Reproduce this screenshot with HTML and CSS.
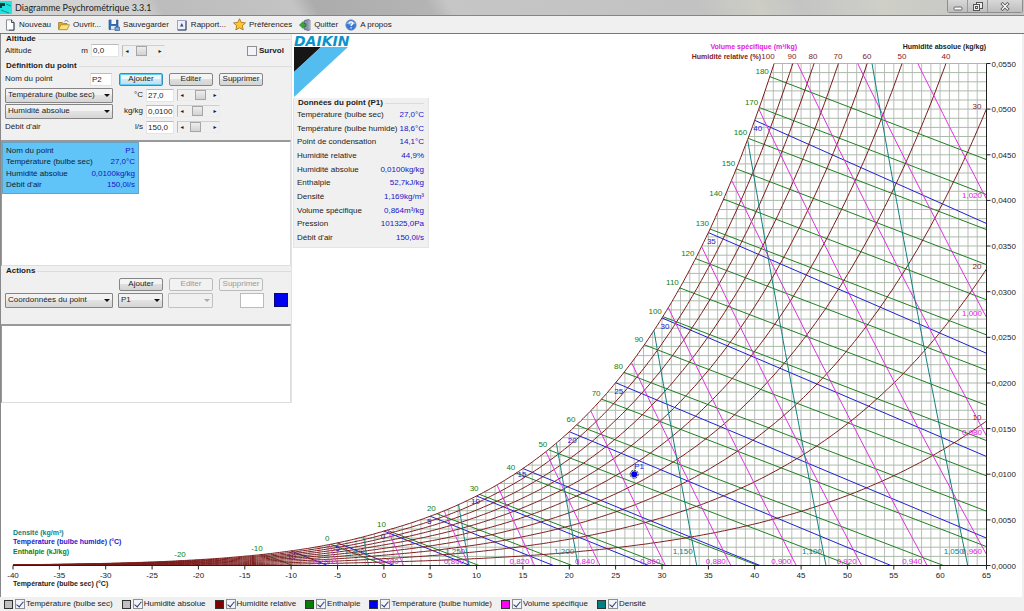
FILE: index.html
```html
<!DOCTYPE html>
<html lang="fr">
<head>
<meta charset="utf-8">
<title>Diagramme Psychrométrique 3.3.1</title>
<link rel="stylesheet" href="styles.css">
</head>
<body>
<div class="app">
  <header class="titlebar">
    <svg class="app-icon" width="12" height="14" viewBox="0 0 12 14" aria-hidden="true"><rect width="12" height="13" fill="#1fe3e0"/><path d="M0 2h5v3H2v2H0z" fill="#103b3c"/><path d="M6 3l5 2M1 9l8 3" stroke="#12908f"/></svg>
    <h1 class="title">Diagramme Psychrométrique 3.3.1</h1>
    <div class="window-buttons">
      <button class="win" type="button" aria-label="Réduire"><svg width="10" height="9" viewBox="0 0 10 9"><rect x="1" y="5" width="8" height="3" rx="1" fill="#fff" stroke="#666"/></svg></button>
      <button class="win" type="button" aria-label="Restaurer"><svg width="10" height="9" viewBox="0 0 10 9" fill="#eee" stroke="#555"><rect x="3.5" y=".5" width="6" height="6"/><rect x=".5" y="2.5" width="6" height="6"/><rect x="2.5" y="4.5" width="2" height="2"/></svg></button>
      <button class="win win-close" type="button" aria-label="Fermer"><svg width="10" height="9" viewBox="0 0 10 9"><path d="M1.5 1l7 7M8.500 1l-7 7" stroke="#555" stroke-width="3"/><path d="M2 1.500l6 6M8 1.500l-6 6" stroke="#fff" stroke-width="1.300"/></svg></button>
    </div>
  </header>

  <nav class="toolbar">
    <button class="tool" type="button"><svg width="12" height="12" viewBox="0 0 12 12"><path d="M2.500.8h5l2.500 2.700v7.700h-7.500z" fill="#fff" stroke="#8a8f9c"/><path d="M7.500.8v2.700H10v7.700H5" fill="none" stroke="#444a5c"/></svg>Nouveau</button>
    <button class="tool" type="button"><svg width="12" height="12" viewBox="0 0 12 12"><path d="M.6 10.500V3.500h3.800l1 1h3.600v6z" fill="#e5a92e" stroke="#9a762a" stroke-width=".8"/><path d="M.6 10.700l2.300-5h8.600l-2.400 5z" fill="#ffe07a" stroke="#b08a2c" stroke-width=".8"/><path d="M6.500 2.400c1.500-1.500 3-1 3.700.4" fill="none" stroke="#5c7da8"/></svg>Ouvrir...</button>
    <button class="tool" type="button"><svg width="12" height="12" viewBox="0 0 12 12"><path d="M1 1h2.500v4h5V1H10v9.500H1z" fill="#3574bd" stroke="#1c4780" stroke-width=".6"/><rect x="3.500" y="1" width="4.500" height="4" fill="#f4f8fd"/><rect x="3" y="7" width="5" height="3.500" fill="#dce8f5"/><path d="M7 8h4.500v3.500H7z" fill="#7ea8da" stroke="#234c80" stroke-width=".6"/></svg>Sauvegarder</button>
    <button class="tool" type="button"><svg width="12" height="12" viewBox="0 0 12 12"><rect x="1.500" y="1.500" width="8.500" height="9.500" fill="#eef1fa" stroke="#9aa4c4"/><path d="M10 2v9H2" fill="none" stroke="#2f3c66"/><path d="M4 7.500l1.800-3.500L7.500 7.500z" fill="#3a4678"/></svg>Rapport...</button>
    <button class="tool" type="button"><svg width="13" height="13" viewBox="0 0 12 12"><path d="M6 .6l1.600 3.500 3.900.4-2.900 2.600.8 3.900L6 9.100 2.600 11l.8-3.900L.5 4.500l3.900-.4z" fill="#ffc634" stroke="#a8731c" stroke-width=".8"/></svg>Préférences</button>
    <button class="tool" type="button"><svg width="12" height="12" viewBox="0 0 12 12"><path d="M5.500 1.500l4-1v11l-4-1z" fill="#8c94b4" stroke="#4a5070" stroke-width=".7"/><path d="M9.500 1h1.500v10H9.500" fill="#c9cde0" stroke="#565c7a" stroke-width=".6"/><path d="M7 4.700H4.300V2.500L.5 6l3.800 3.500V7.300H7z" fill="#34b233" stroke="#14701a" stroke-width=".7"/></svg>Quitter</button>
    <button class="tool" type="button"><svg width="12" height="12" viewBox="0 0 12 12"><circle cx="6" cy="6" r="5.200" fill="#3c78cf" stroke="#6f8fc4" stroke-width=".8"/><path d="M1.500 4.500a5 4 0 0 1 9 0c-2 1.500-7 1.500-9 0z" fill="#8fb8ee"/><path d="M4.300 4.400c.2-2 3.500-1.900 3.400 0 0 1.200-1.600 1.100-1.600 2.600M6.100 8.200v1.300" fill="none" stroke="#fff" stroke-width="1.300"/></svg>A propos</button>
  </nav>

  <main class="workspace">
    <svg class="chart" id="chart" viewBox="0 34 1024 563" preserveAspectRatio="xMinYMin meet" role="img" aria-label="Diagramme psychrométrique"></svg>

    <aside class="side">
      <section class="group">
        <h2 class="group-title">Altitude</h2>
        <div class="row">
          <label class="wide" for="alt">Altitude</label><span class="unit unit-alt">m</span>
          <input class="field field-alt" id="alt" value="0,0">
          <span class="slider"><button class="step" type="button" aria-label="Moins">◂</button><input class="range" type="range" aria-label="Altitude" value="35"><button class="step" type="button" aria-label="Plus">▸</button></span>
          <label class="check"><input class="box" type="checkbox">Survol</label>
        </div>
      </section>

      <section class="group group-def">
        <h2 class="group-title">Définition du point</h2>
        <div class="row">
          <label class="name" for="name">Nom du point</label>
          <input class="field field-name" id="name" value="P2">
          <div class="buttons"><button class="btn btn-default" type="button">Ajouter</button><button class="btn" type="button">Editer</button><button class="btn" type="button">Supprimer</button></div>
        </div>
        <div class="row">
          <span class="select"><select aria-label="Premier paramètre"><option>Température (bulbe sec)</option></select></span><label class="unit" for="t">°C</label>
          <input class="field" id="t" value="27,0">
          <span class="slider"><button class="step" type="button" aria-label="Moins">◂</button><input class="range" type="range" aria-label="Température" value="66"><button class="step" type="button" aria-label="Plus">▸</button></span>
        </div>
        <div class="row">
          <span class="select"><select aria-label="Second paramètre"><option>Humidité absolue</option></select></span><label class="unit" for="w">kg/kg</label>
          <input class="field" id="w" value="0,0100">
          <span class="slider"><button class="step" type="button" aria-label="Moins">◂</button><input class="range" type="range" aria-label="Humidité" value="40"><button class="step" type="button" aria-label="Plus">▸</button></span>
        </div>
        <div class="row">
          <label class="select-label" for="q">Débit d'air</label><span class="unit">l/s</span>
          <input class="field" id="q" value="150,0">
          <span class="slider"><button class="step" type="button" aria-label="Moins">◂</button><input class="range" type="range" aria-label="Débit" value="25"><button class="step" type="button" aria-label="Plus">▸</button></span>
        </div>
      </section>

      <div class="list list-points">
        <table class="point rows">
          <tbody>
          <tr><th>Nom du point</th><td>P1</td></tr>
          <tr><th>Température (bulbe sec)</th><td>27,0°C</td></tr>
          <tr><th>Humidité absolue</th><td>0,0100kg/kg</td></tr>
          <tr><th>Débit d'air</th><td>150,0l/s</td></tr>
          </tbody>
        </table>
      </div>

      <section class="group group-actions">
        <h2 class="group-title">Actions</h2>
        <div class="row row-end">
          <div class="buttons"><button class="btn" type="button">Ajouter</button><button class="btn" type="button" disabled>Editer</button><button class="btn" type="button" disabled>Supprimer</button></div>
        </div>
        <div class="row">
          <span class="select"><select aria-label="Action"><option>Coordonnées du point</option></select></span>
          <span class="select select-small"><select aria-label="Point"><option>P1</option></select></span>
          <span class="select select-small select-off"><select aria-label="Second point" disabled><option></option></select></span>
          <input class="field field-value" aria-label="Valeur">
          <button class="swatch-btn" type="button" aria-label="Couleur"></button>
        </div>
      </section>

      <div class="list list-actions"></div>
    </aside>

    <div class="info">
      <div class="logo">
        <span class="logo-name">DAIKIN</span>
        <svg width="55" height="50" viewBox="0 0 55 50" aria-hidden="true"><path d="M0 0h27L0 25z" fill="#161616"/><path d="M27 0h27L0 50V25z" fill="#53bdf0"/></svg>
      </div>
      <section class="data">
        <h2 class="group-title">Données du point (P1)</h2>
        <table class="data-table rows">
          <tbody>
          <tr><th>Température (bulbe sec)</th><td>27,0°C</td></tr>
          <tr><th>Température (bulbe humide)</th><td>18,6°C</td></tr>
          <tr><th>Point de condensation</th><td>14,1°C</td></tr>
          <tr><th>Humidité relative</th><td>44,9%</td></tr>
          <tr><th>Humidité absolue</th><td>0,0100kg/kg</td></tr>
          <tr><th>Enthalpie</th><td>52,7kJ/kg</td></tr>
          <tr><th>Densité</th><td>1,169kg/m³</td></tr>
          <tr><th>Volume spécifique</th><td>0,864m³/kg</td></tr>
          <tr><th>Pression</th><td>101325,0Pa</td></tr>
          <tr><th>Débit d'air</th><td>150,0l/s</td></tr>
          </tbody>
        </table>
      </section>
    </div>
  </main>

  <footer class="legend">
    <label class="key"><span class="swatch c-grey"></span><input class="box" type="checkbox" checked>Température (bulbe sec)</label>
    <label class="key"><span class="swatch c-grey"></span><input class="box" type="checkbox" checked>Humidité absolue</label>
    <label class="key"><span class="swatch c-red"></span><input class="box" type="checkbox" checked>Humidité relative</label>
    <label class="key"><span class="swatch c-green"></span><input class="box" type="checkbox" checked>Enthalpie</label>
    <label class="key"><span class="swatch c-blue"></span><input class="box" type="checkbox" checked>Température (bulbe humide)</label>
    <label class="key"><span class="swatch c-pink"></span><input class="box" type="checkbox" checked>Volume spécifique</label>
    <label class="key"><span class="swatch c-teal"></span><input class="box" type="checkbox" checked>Densité</label>
  </footer>
</div>
<script src="chart.js"></script>
</body>
</html>
```

FILE: styles.css
```css
* { box-sizing: border-box; }
body { margin: 0; background: #f0f0f0; color: #1c1c1c; font: 8px/10px "Liberation Sans", Arial, sans-serif; }
button, input, select { font: inherit; color: inherit; margin: 0; padding: 0; }
h1, h2 { margin: 0; font-size: inherit; }

.app { display: flex; flex-direction: column; min-height: 100vh; }

.titlebar {
  display: flex; align-items: center; height: 16px; flex: none;
  border-bottom: 1px solid #858585;
  background: linear-gradient(60deg, #d6d6d6 0, #cfcfcf 14%, #bcbcbc 16%, #c4c4c4 29%, #acacac 31%, #b4b4b4 42%, #c6c6c6 44%, #c2c2c2 68%, #cdcdc6 74%, #c4c4c4 78%, #cfcfc8 86%, #c2c2c2 100%);
}
.app-icon { flex: none; }
.title { margin-left: 3px; font: 9px/14px Lato, sans-serif; color: #222; }
.window-buttons { display: flex; align-self: flex-start; margin: 0 1px 0 auto; border: 1px solid #8d8d8d; border-top: 0; border-radius: 0 0 3px 3px; }
.win { display: grid; place-items: center; width: 20px; height: 12px; border: 0; border-right: 1px solid #999; background: linear-gradient(#d8d8d8, #bdbdbd); }
.win-close { width: 34px; border-right: 0; }

.toolbar { display: flex; align-items: center; gap: 7px; height: 18px; flex: none; padding-left: 4px; border-bottom: 1px solid #777; }
.tool { display: flex; align-items: center; gap: 3px; border: 0; background: none; }

.workspace { display: grid; grid-template-columns: 292px 137px 1fr; flex: 1; align-items: start; background: #fff; box-shadow: inset 1px 0 #888, inset -2px 0 #f0f0f0; }
.chart { grid-area: 1 / 1 / 2 / -1; display: block; width: 100%; height: auto; }
.side { grid-area: 1 / 1; background: #f0f0f0; border-left: 1px solid #888; border-right: 1px solid #e2e2e2; }
.info { grid-area: 1 / 2; padding: 2px 0 0 1px; }

.group { padding: 0 0 1px 4px; }
.group-title { display: flex; align-items: center; gap: 2px; height: 10px; padding-left: 1px; font-weight: bold; }
.group-title::after { content: ""; flex: 1; height: 1px; background: #dcdcdc; }
.group-def { padding: 3px 0 5px 4px; }
.group-def .row { height: 16px; }
.group-actions { padding-bottom: 16px; }
.row { display: flex; align-items: center; height: 13px; }
.group-actions .row { height: 16px; }
.row-end { padding-left: 114px; }

.wide { width: 68px; }
.unit { width: 30px; text-align: right; }
.unit-alt { width: 15px; }
.name { width: 85px; }
.select-label { width: 108px; }
.field { width: 28px; height: 13px; margin: 0 2px 0 3px; padding-left: 1px; border: 1px solid #e4e4e4; border-top-color: #bbb; background: #fff; }
.field-name { width: 22px; margin: 0 7px 0 0; }
.field-value { width: 24px; margin: 0 10px 0 27px; height: 15px; border-color: #bbb; }
.swatch-btn { width: 14px; height: 14px; border: 1px solid #0a0a70; background: #0000f0; }

.buttons { display: flex; gap: 6px; }
.btn { width: 44px; height: 13px; border: 1px solid #858585; border-radius: 2px; background: linear-gradient(#f4f4f4 45%, #dedede 50%, #d4d4d4); line-height: 10px; }
.btn-default { border-color: #2f8fc0; box-shadow: inset 0 0 0 1px #5fd0f5; background: linear-gradient(#eef7fb 45%, #d3e7f1 50%, #c4dde9); }
.btn:disabled { color: #999; border-color: #bbb; background: #f2f2f2; }

.select { display: grid; align-items: center; width: 108px; }
.select select { grid-area: 1 / 1; width: 100%; height: 15px; appearance: none; padding-left: 2px; border: 1px solid #858585; border-radius: 1px; background: linear-gradient(#f2f2f2 45%, #e2e2e2 50%, #d6d6d6); }
.select::after { content: ""; grid-area: 1 / 1; z-index: 1; justify-self: end; margin-right: 3px; border: 3px solid transparent; border-top-color: #111; border-bottom: 0; pointer-events: none; }
.select-small { width: 45px; margin-left: 5px; }
.select-off select { border-color: #c2c2c2; background: #f0f0f0; opacity: 1; }
.select-off::after { border-top-color: #aaa; }

.slider { display: flex; align-items: center; width: 43px; height: 12px; margin-left: 1px; border: 1px solid #dadada; border-color: #cfcfcf #ececec #ececec #bbb; }
.step { width: 8px; border: 0; background: none; font: 6px/10px "DejaVu Sans", sans-serif; }
.range { flex: 1; min-width: 0; height: 10px; appearance: none; background: none; }
.range::-webkit-slider-thumb { appearance: none; width: 11px; height: 10px; border: 1px solid #a6a6a6; background: linear-gradient(#eee, #d2d2d2); }

.check { display: flex; align-items: center; gap: 2px; margin-left: 82px; font-weight: bold; }
.box { display: grid; place-items: center; width: 10px; height: 10px; flex: none; appearance: none; border: 1px solid #8e8f8f; background: #f2f4f8; }
.box:checked::after { content: ""; width: 3px; height: 6px; margin-top: -1px; border: solid #2b3a78; border-width: 0 1px 1px 0; transform: rotate(40deg); }

.list { border: 1px solid #ddd; border-top: 2px solid #999; border-left-color: #999; background: #fff; }
.list-points { height: 126px; }
.list-actions { height: 79px; }
.rows { display: block; white-space: nowrap; }
.rows tbody { display: flex; flex-direction: column; justify-content: space-between; height: 100%; }
.rows tr { display: flex; justify-content: space-between; }
th, td { padding: 0; font-weight: normal; text-align: left; }
td { text-align: right; color: #1414c8; }
.point { width: 137px; height: 52px; border: 1px solid #6aa0c0; padding: 3px; background: #60c4f8; }
.point th { color: #123; }

.logo { display: flex; flex-direction: column; gap: 1px; height: 62px; padding-left: 1px; }
.logo-name { font: italic bold 14px/10px "DejaVu Sans", sans-serif; color: #0b93c8; }
.data { border: 1px solid #e4e4e4; border-top: 0; background: #f0f0f0; padding: 0 4px 4px 3px; }
.data-table { height: 135px; padding-top: 2px; }

.legend { display: flex; align-items: center; gap: 9px; height: 14px; flex: none; padding-left: 4px; }
.key { display: flex; align-items: center; gap: 1px; white-space: nowrap; }
.swatch { width: 9px; height: 9px; margin-right: 1px; border: 1px solid #333; }
.c-grey { background: #c0c0c0; }
.c-red { background: #800000; }
.c-green { background: #008000; }
.c-blue { background: #0000f0; }
.c-pink { background: #ff00ff; }
.c-teal { background: #008080; }

.grid-v { stroke: #bcbcbc; }
.grid-h { stroke: #a9bca9; }
.rh { stroke: #7c1c1c; }
.enthalpy { stroke: #208020; }
.wet { stroke: #2020d0; }
.volume { stroke: #e030e0; }
.density { stroke: #108080; }
.axis { stroke: #222; }
.chart path { fill: none; stroke-width: 1; }
.t-black { fill: #222; }
.t-rh { fill: #801c1c; }
.t-enthalpy { fill: #108010; }
.t-wet { fill: #1818d0; }
.t-volume { fill: #e020e0; }
.t-density { fill: #108080; }
.bold { font-size: 7px; font-weight: bold; }
.dot { fill: #0000e8; }
.dot-ring { fill: none; stroke: #222; stroke-dasharray: 2 1; }
```

FILE: chart.js
```js
const svg = document.getElementById('chart');
const NS = 'http://www.w3.org/2000/svg';
const T_MIN = -40, T_MAX = 65, W_MAX = 0.055, P = 101325;
const LEFT = 13, RIGHT = 986.5, TOP = 63.5, BOTTOM = 565.5;

const px = t => LEFT + (t - T_MIN) * (RIGHT - LEFT) / (T_MAX - T_MIN);
const py = w => BOTTOM - w * (BOTTOM - TOP) / W_MAX;

// Saturation vapour pressure (Pa), over ice below 0 °C.
const psat = t => t < 0
  ? 611.15 * Math.exp(22.452 * t / (272.55 + t))
  : 611.2 * Math.exp(17.62 * t / (243.12 + t));
const humidity = (t, rh) => 0.622 * rh * psat(t) / (P - rh * psat(t));

function el(name, attrs, text) {
  const node = document.createElementNS(NS, name);
  for (const key in attrs) node.setAttribute(key, attrs[key]);
  if (text !== undefined) node.textContent = text;
  svg.appendChild(node);
}
const path = (cls, pts) => el('path', { class: cls, d: 'M' + pts.map(p => p[0].toFixed(1) + ' ' + p[1].toFixed(1)).join('L') });
const label = (cls, x, y, text, anchor = 'middle') => el('text', { class: cls, x, y, 'text-anchor': anchor }, text);

function solve(f, lo, hi) {
  const sign = f(lo) < 0;
  for (let i = 0; i < 50; i++) {
    const mid = (lo + hi) / 2;
    if ((f(mid) < 0) === sign) lo = mid; else hi = mid;
  }
  return (lo + hi) / 2;
}

for (let t = T_MIN + 1; t <= T_MAX; t++) {
  path('grid-v', [[px(t), BOTTOM], [px(t), py(Math.min(W_MAX, humidity(t, 1)))]]);
}
for (let i = 1; i <= 55; i++) {
  const t = solve(v => humidity(v, 1) - i / 1000, -40, 65);
  path('grid-h', [[px(t), py(i / 1000)], [RIGHT, py(i / 1000)]]);
}

// Straight line falling from the saturation curve at temperature t.
function falling(cls, t, slope) {
  const x = px(t), y = py(humidity(t, 1));
  let x2 = RIGHT, y2 = y + (RIGHT - x) * slope;
  if (y2 > BOTTOM) { x2 = x + (BOTTOM - y) / slope; y2 = BOTTOM; }
  path(cls, [[x, y], [x2, y2]]);
  return [x, y];
}

for (let h = -20; h <= 180; h += 10) {
  const t = solve(v => 1.006 * v + humidity(v, 1) * (2501 + 1.86 * v) - h, -40, 60);
  const [x, y] = falling('enthalpy', t, 0.383);
  label('t-enthalpy', x - 1, y - 3, h, 'end');
}

const wetSlopes = { '-10': 0.4, '-5': 0.4, 0: 0.4, 5: 0.4, 10: 0.404, 15: 0.409, 20: 0.416, 25: 0.419, 30: 0.427, 35: 0.434, 40: 0.445 };
for (let t = -10; t <= 40; t += 5) {
  const [x, y] = falling('wet', t, wetSlopes[t]);
  label('t-wet', x + (t >= 20 ? 3 : -1), y + 11 - (t < 20 ? 3 : 0), t);
}

for (let i = 1; i <= 10; i++) {
  const pts = [];
  for (let t = T_MIN; t <= T_MAX; t += 0.25) {
    if (humidity(t, i / 10) > W_MAX) {
      pts.push([px(solve(v => humidity(v, i / 10) - W_MAX, 0, 80)), TOP]);
      break;
    }
    pts.push([px(t), py(humidity(t, i / 10))]);
  }
  path('rh', pts);
}

// Line t(w) running from w = 0 up to saturation, the top or the right edge.
function rising(cls, tAt) {
  const full = solve(w => tAt(w) - solve(t => humidity(t, 1) - w, -45, 70), 0.0003, 0.1);
  const wEnd = Math.min(full, W_MAX);
  const pts = [];
  for (let i = 0; i <= 40; i++) {
    const w = wEnd * i / 40;
    if (tAt(w) <= T_MAX) pts.push([px(tAt(w)), py(w)]);
  }
  if (tAt(0) > T_MAX) pts.unshift([RIGHT, py(solve(w => tAt(w) - T_MAX, 0, W_MAX))]);
  path(cls, pts);
  return pts[0];
}
const comma = v => v.toFixed(3).replace('.', ',');

for (let v = 0.76; v < 1.03; v += 0.02) {
  const [x, y] = rising('volume', w => v * 101.325 / (0.2871 * (1 + 1.6078 * w)) - 273.15);
  if (x < RIGHT - 1) label('t-volume', x - 5, 564, comma(v), 'end');
  else label('t-volume', 982, y - (v > 0.97 ? 1 : 0), comma(v), 'end');
}
for (let d = 1.05; d < 1.31; d += 0.05) {
  const [x] = rising('density', w => 101.325 * (1 + w) / (0.2871 * d * (1 + 1.6078 * w)) - 273.15);
  label('t-density', x - 4, 554, comma(d), 'end');
}

// Axes
path('axis', [[LEFT, BOTTOM], [RIGHT, BOTTOM], [RIGHT, TOP]]);
for (let t = T_MIN; t <= T_MAX; t += 5) {
  path('axis', [[px(t), BOTTOM], [px(t), BOTTOM + 4]]);
  label('t-black', px(t), 578, t);
}
for (let i = 0; i <= 11; i++) {
  const w = i * 0.005;
  path('axis', [[RIGHT, py(w)], [RIGHT + 4, py(w)]]);
  label('t-black', RIGHT + 5, py(w) + 3, w.toFixed(4).replace('.', ','), 'start');
}

for (const [rh, x, y] of [[100, 768, 59], [90, 792, 59], [80, 813, 59], [70, 838, 59], [60, 867, 59], [50, 902, 59], [40, 946, 59], [30, 977, 109], [20, 977, 269], [10, 977, 420]]) {
  label('t-rh', x, y, rh);
}

label('t-volume bold', 797, 49, 'Volume spécifique (m³/kg)', 'end');
label('t-black bold', 986, 49, 'Humidité absolue (kg/kg)', 'end');
label('t-rh bold', 761, 59, 'Humidité relative (%)', 'end');
label('t-density bold', LEFT, 535, 'Densité (kg/m³)', 'start');
label('t-wet bold', LEFT, 544, 'Température (bulbe humide) (°C)', 'start');
label('t-enthalpy bold', LEFT, 554, 'Enthalpie (kJ/kg)', 'start');
label('t-black bold', LEFT, 586, 'Température (bulbe sec) (°C)', 'start');

el('circle', { class: 'dot', cx: px(27), cy: py(0.01), r: 3 });
el('circle', { class: 'dot-ring', cx: px(27), cy: py(0.01), r: 4 });
label('t-wet', px(27) + 5, py(0.01) - 5, 'P1');
```
